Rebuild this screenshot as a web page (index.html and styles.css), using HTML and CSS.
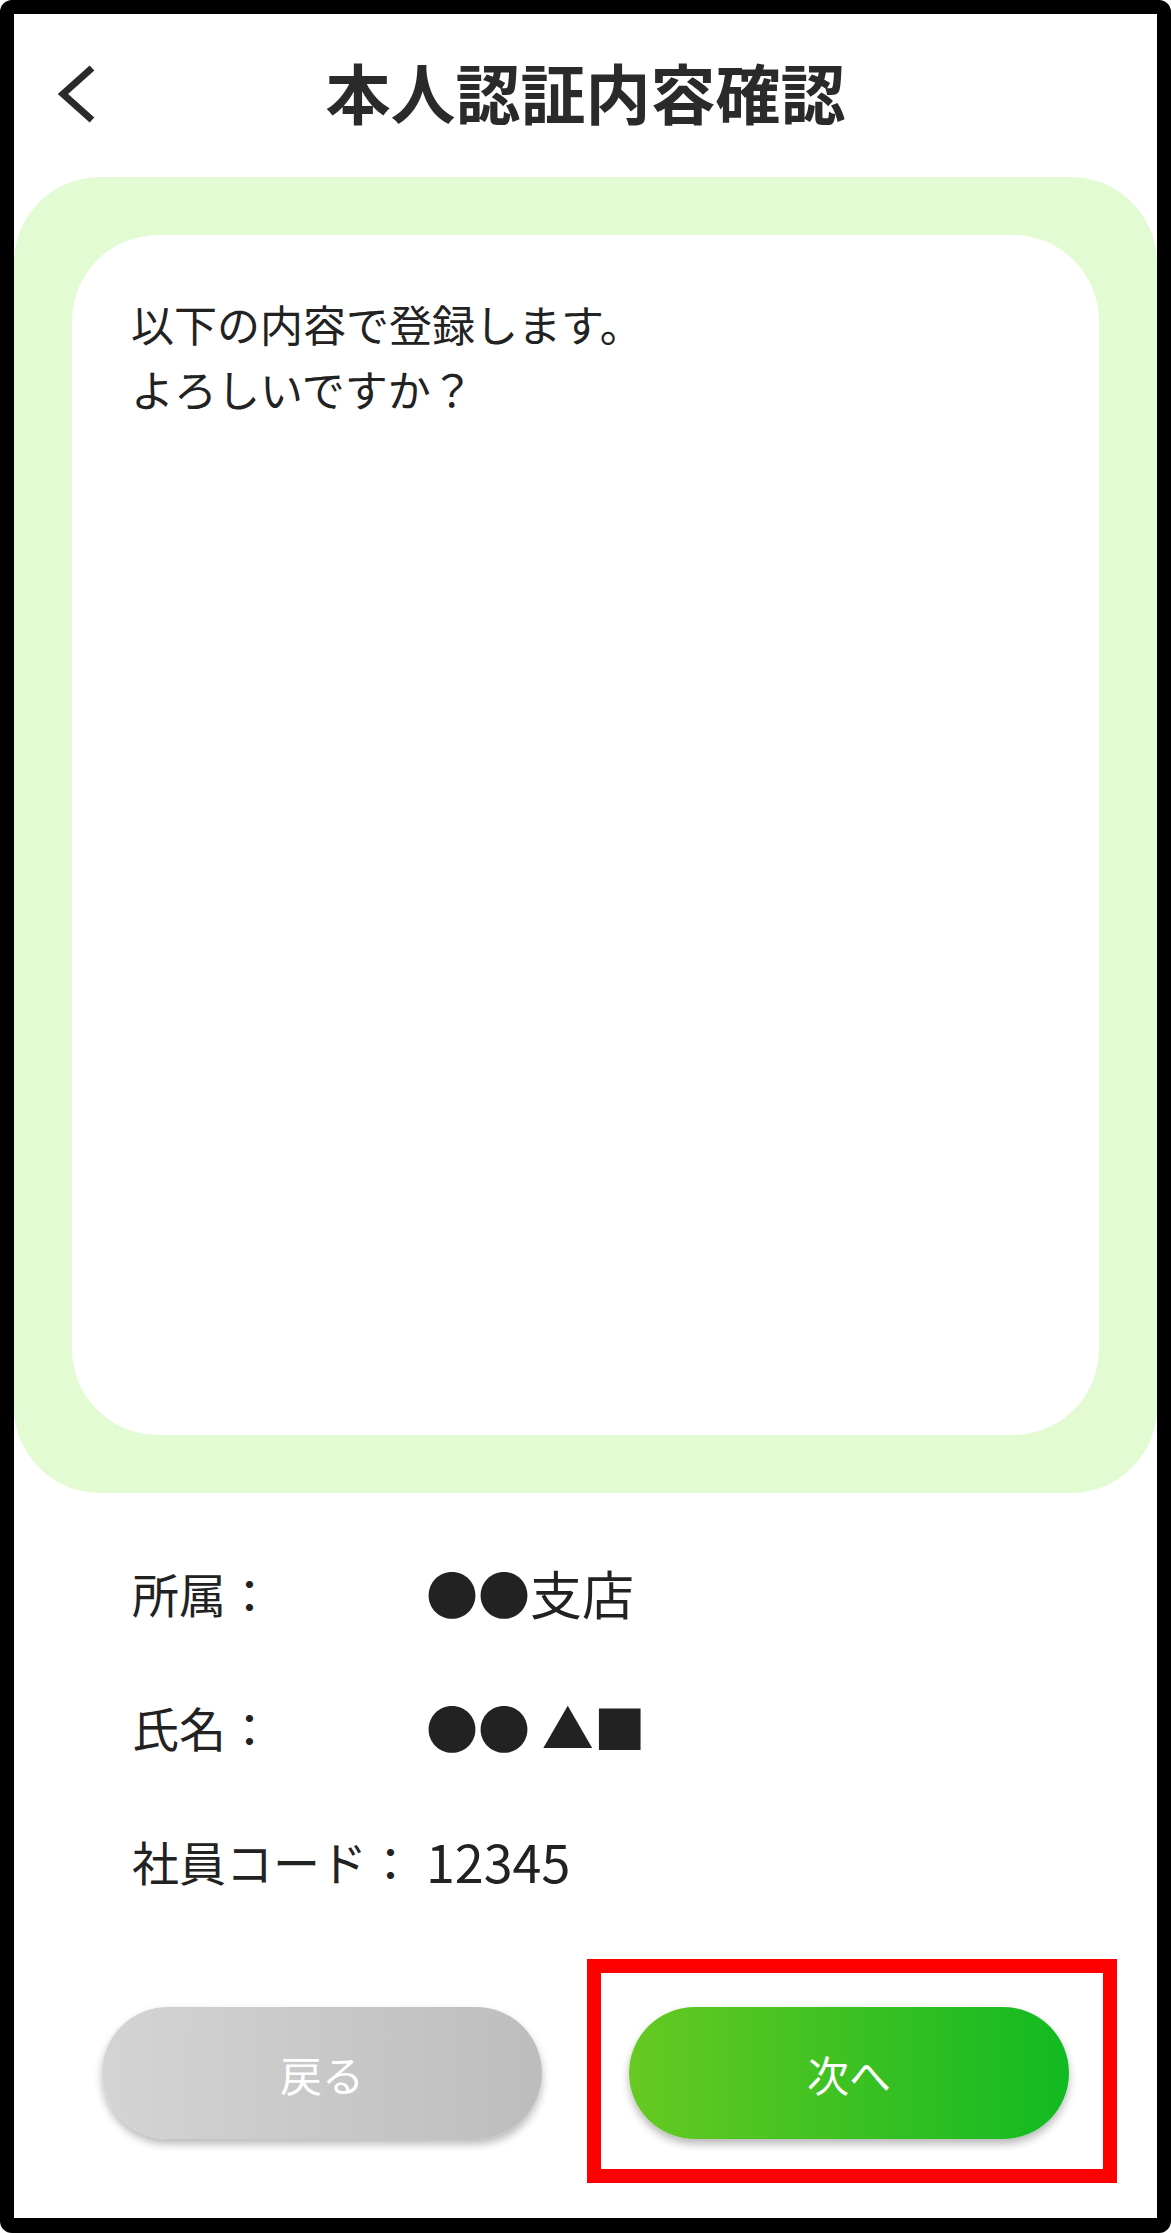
FILE: index.html
```html
<!DOCTYPE html>
<html lang="ja">
<head>
<meta charset="utf-8">
<title>本人認証内容確認</title>
<link rel="stylesheet" href="styles.css">
</head>
<body>
<div class="phone">
  <header class="header">
    <button class="back" aria-label="戻る">
      <svg width="40" height="60" viewBox="0 0 40 60">
        <polyline points="34,4 5,30 34,56" fill="none" stroke="#2a2a2a" stroke-width="7" stroke-linecap="butt" stroke-linejoin="miter"/>
      </svg>
    </button>
    <h1 class="title">本人認証内容確認</h1>
    <span></span>
  </header>

  <section class="panel">
    <div class="card">
      <p class="message">以下の内容で登録します。<br>よろしいですか？</p>
    </div>
  </section>

  <dl class="info">
    <dt>所属：</dt><dd>●●支店</dd>
    <dt>氏名：</dt><dd>●● ▲■</dd>
    <dt>社員コード：</dt><dd>12345</dd>
  </dl>

  <div class="actions">
    <button class="btn btn-back">戻る</button>
    <div class="next-wrap">
      <button class="btn btn-next">次へ</button>
      <span class="highlight"></span>
    </div>
  </div>
</div>
</body>
</html>
```

FILE: styles.css
```css
* { box-sizing: border-box; }

html, body {
  margin: 0;
  padding: 0;
  background: #ffffff;
}

body {
  font-family: "Noto Sans CJK JP", "Noto Sans", sans-serif;
  color: #222222;
}

.phone {
  width: 1171px;
  height: 2233px;
  border: 14px solid #000000;
  border-bottom-width: 15px;
  border-radius: 12px;
  background: #ffffff;
  display: flex;
  flex-direction: column;
  overflow: hidden;
}

.header {
  height: 163px;
  display: grid;
  grid-template-columns: 1fr auto 1fr;
  align-items: center;
  padding-left: 44px;
}

.back {
  justify-self: start;
  background: none;
  border: 0;
  padding: 0;
  margin: 0 0 4px 0;
  width: 40px;
  height: 60px;
  display: flex;
  cursor: pointer;
}

.title {
  margin: 0 0 0 -44px;
  font-size: 65px;
  font-weight: 700;
  color: #2a2a2a;
  line-height: 1;
  padding-bottom: 8px;
}

.panel {
  height: 1316px;
  background: #e2fbd3;
  border-radius: 86px;
  padding: 58px;
  display: flex;
}

.card {
  flex: 1;
  background: #ffffff;
  border-radius: 86px;
  padding: 56px 59px;
}

.message {
  margin: 0;
  font-size: 43px;
  line-height: 65px;
  color: #222222;
}

.info {
  margin: 33px 0 0 0;
  padding-left: 118px;
  display: grid;
  grid-template-columns: 294px 1fr;
  grid-auto-rows: 134px;
  align-items: center;
}

.info dt {
  font-size: 47px;
  line-height: 134px;
  color: #222222;
}

.info dd {
  margin: 0;
  font-size: 52px;
  line-height: 134px;
  color: #222222;
}

.actions {
  margin-top: 79px;
  display: flex;
  justify-content: center;
  gap: 87px;
}

.next-wrap {
  position: relative;
  display: flex;
}

.btn {
  width: 440px;
  height: 132px;
  border: 0;
  border-radius: 66px;
  font-family: "Noto Sans CJK JP", "Noto Sans", sans-serif;
  font-size: 42px;
  color: #ffffff;
  box-shadow: 0 5px 8px rgba(0, 0, 0, 0.28);
  padding: 0;
  cursor: pointer;
}

.btn-back {
  background: linear-gradient(to right, #d4d4d4, #bdbdbd);
}

.btn-next {
  background: linear-gradient(to right, #67c922, #12ba22);
}

.highlight {
  position: absolute;
  top: -48px;
  left: -42px;
  right: -48px;
  bottom: -44px;
  border: 14px solid #ff0000;
  pointer-events: none;
}
```
